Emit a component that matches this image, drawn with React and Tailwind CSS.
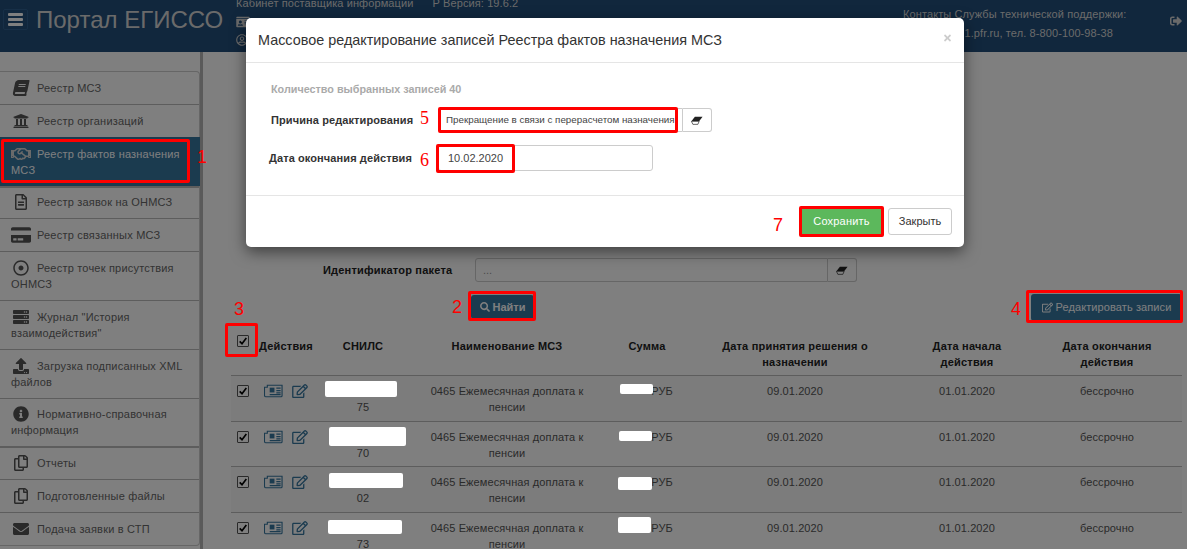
import React from 'react';
import {
  FaBook, FaUniversity, FaRegHandshake, FaRegFileAlt, FaCreditCard, FaRegDotCircle, FaServer,
  FaUpload, FaInfoCircle, FaRegCopy, FaEnvelope, FaSearch, FaRegEdit,
  FaSignOutAlt, FaTimes, FaIdCard, FaRegUserCircle,
} from 'react-icons/fa';

const iconNarrow = 'ml-[2px] h-[16px] w-[16px]';
const iconWide = '-my-[1px] h-[18px] w-[20px]';

const menuItems = [
  { icon: FaBook, label: 'Реестр МСЗ', iconCls: `${iconNarrow} -skew-x-12` },
  { icon: FaUniversity, label: 'Реестр организаций', iconCls: 'ml-[1px] h-[16px] w-[18px]' },
  { icon: FaRegHandshake, label: 'Реестр фактов назначения МСЗ', active: true, iconCls: iconWide },
  { icon: FaRegFileAlt, label: 'Реестр заявок на ОНМСЗ', iconCls: iconNarrow },
  { icon: FaCreditCard, label: 'Реестр связанных МСЗ', iconCls: iconWide },
  { icon: FaRegDotCircle, label: 'Реестр точек присутствия ОНМСЗ', iconCls: iconNarrow },
  { icon: FaServer, label: 'Журнал "История взаимодействия"', iconCls: iconNarrow },
  { icon: FaUpload, label: 'Загрузка подписанных XML файлов', iconCls: iconNarrow },
  { icon: FaInfoCircle, label: 'Нормативно-справочная информация', iconCls: iconNarrow },
  { icon: FaRegCopy, label: 'Отчеты', iconCls: iconNarrow },
  { icon: FaRegCopy, label: 'Подготовленные файлы', iconCls: iconNarrow },
  { icon: FaEnvelope, label: 'Подача заявки в СТП', iconCls: iconNarrow },
];

const rows = ['75', '70', '02', '73'];

const columns = 'grid grid-cols-[23px_64px_90px_198px_82px_214px_130px_150px]';

// подписи и рамки, нанесённые поверх снимка
const redBoxes = [
  'left-[1px] top-[139px] w-[189px] h-[44px]',
  'left-[225px] top-[323px] w-[33px] h-[34px]',
  'left-[468px] top-[291px] w-[68px] h-[30px]',
  'left-[1026px] top-[290px] w-[157px] h-[33px]',
  'left-[438px] top-[107px] w-[240px] h-[26px]',
  'left-[436px] top-[144px] w-[79px] h-[29px]',
  'left-[799px] top-[206px] w-[85px] h-[31px]',
];

const redLabels = [
  { text: '1', cls: 'left-[197px] top-[148px]' },
  { text: '2', cls: 'left-[452px] top-[298px]' },
  { text: '3', cls: 'left-[234px] top-[300px]' },
  { text: '4', cls: 'left-[1011px] top-[300px]' },
  { text: '5', cls: 'left-[420px] top-[109px] font-["Liberation_Serif",serif]' },
  { text: '6', cls: 'left-[420px] top-[151px] font-["Liberation_Serif",serif]' },
  { text: '7', cls: 'left-[773px] top-[216px]' },
];

const whiteBlobs = [
  'left-[325px] top-[381px] w-[72px] h-[16px]',
  'left-[620px] top-[384px] w-[33px] h-[10px]',
  'left-[329px] top-[427px] w-[77px] h-[19px]',
  'left-[619px] top-[431px] w-[33px] h-[10px]',
  'left-[329px] top-[473px] w-[74px] h-[15px]',
  'left-[618px] top-[477px] w-[34px] h-[13px]',
  'left-[328px] top-[520px] w-[74px] h-[14px]',
  'left-[618px] top-[517px] w-[33px] h-[16px]',
];

const Checkbox = () => (
  <span className="flex h-[12px] w-[12px] items-center justify-center rounded-[1px] border border-[#555] bg-white">
    <svg viewBox="0 0 12 12" className="h-[10px] w-[10px]" fill="none" stroke="#000" strokeWidth="2">
      <path d="M2 6.5 L4.8 9.2 L10 2.5" />
    </svg>
  </span>
);

// ластик лежит плашмя: косой параллелограмм с тёмным верхом
const Eraser = () => (
  <svg viewBox="0 0 14 10" className="h-[9px] w-[12px]">
    <path d="M4.5 0.5 H13.5 L9.5 6 H0.5 Z" fill="#222" />
    <path d="M0.5 6 H9.5 L8 9.5 H2.2 Z" fill="#fff" stroke="#222" strokeWidth="0.8" />
  </svg>
);

const Newspaper = () => (
  <svg viewBox="0 0 20 14" className="h-[14px] w-[19px]" fill="none" stroke="currentColor">
    <path d="M3.5 1 H19 V12 a1 1 0 0 1 -1 1 H2 a1.5 1.5 0 0 1 -1.5 -1.5 V3 H3.5 Z" strokeWidth="1.2" />
    <rect x="6" y="3.5" width="5" height="5" fill="currentColor" stroke="none" />
    <path d="M13 4 H17.5 M13 6.5 H17.5 M13 9 H17.5 M6 10.8 H17.5" strokeWidth="1.3" />
  </svg>
);

const Sidebar = () => (
  <aside className="w-[203px] shrink-0 border-r-[3px] border-[#b5b5b5] pt-[19px]">
    <div className="w-[200px] rounded-r-[4px] border-y border-r border-[#ccc]">
      {menuItems.map((item, i) => {
        const Icon = item.icon;
        let rowCls = 'border-t border-[#bbb] pt-[8px] text-[#666]';
        if (i === 0) rowCls = 'pt-[8px] text-[#666]';
        if (item.active) rowCls = '-mr-px bg-[#36769f] pt-[9px] text-white';
        if (i === 3) rowCls = 'border-t-2 border-[#bbb] pt-[6px] text-[#666]';
        if (i === 8) rowCls = 'border-t border-[#bbb] pt-[7px] text-[#666]';
        if (i === 9) rowCls = 'border-t-2 border-[#bbb] pt-[7px] text-[#666]';
        return (
          <div key={i} className={`px-[11px] pb-[8px] text-[11px] leading-[16px] tracking-[0.2px] ${rowCls}`}>
            <span className="inline-block h-[16px] w-[26px] align-top">
              <Icon className={`block ${item.iconCls} ${item.active ? 'text-[#d5d5d5]' : 'text-[#555]'}`} />
            </span>
            {item.label}
          </div>
        );
      })}
    </div>
  </aside>
);

const Records = () => (
  <main className="flex-1 pl-[28px] pr-[5px] pt-[206px] text-[11px] text-[#555]">
    <div className="flex h-[24px] items-center">
      <span className="ml-[92px] w-[152px] font-bold text-[#222] tracking-[0.2px]">Идентификатор пакета</span>
      <div className="flex h-[24px] w-[382px]">
        <div className="flex-1 rounded-l-[3px] border border-[#ccc] px-[7px] leading-[22px] text-[#999]">...</div>
        <div className="flex w-[29px] items-center justify-center rounded-r-[3px] border border-l-0 border-[#ccc]">
          <Eraser />
        </div>
      </div>
    </div>

    <div className="mt-[12px] flex h-[26px] items-center justify-between">
      <button className="ml-[240px] flex h-[24px] w-[63px] items-center justify-center gap-[3px] rounded-[3px] bg-[#36769f] font-bold text-white">
        <FaSearch className="h-[10px] w-[10px]" />
        Найти
      </button>
      <button className="flex h-[27px] w-[151px] items-center justify-center gap-[3px] rounded-[3px] bg-[#36769f] tracking-[0.1px] text-white">
        <FaRegEdit className="h-[11px] w-[11px]" />
        Редактировать записи
      </button>
    </div>

    <div className={`${columns} mt-[17px] h-[39px] border-b border-[#bbb] text-center font-bold leading-[16px] text-[#222] tracking-[0.2px]`}>
      <div className="-mt-[2px] flex justify-center">
        <Checkbox />
      </div>
      <div className="pt-[1px]">Действия</div>
      <div className="pt-[1px]">СНИЛС</div>
      <div className="pt-[1px]">Наименование МСЗ</div>
      <div className="pt-[1px]">Сумма</div>
      <div className="px-[14px] pt-[1px]">Дата принятия решения о назначении</div>
      <div className="px-[20px] pt-[1px]">Дата начала действия</div>
      <div className="px-[20px] pt-[1px]">Дата окончания действия</div>
    </div>

    {rows.map((tail, i) => (
      <div
        key={i}
        className={`${columns} h-[45.5px] border-b border-[#bbb] pt-[7px] text-center leading-[16px] tracking-[0.1px] ${i % 2 === 0 ? 'bg-[#f8f8f8]' : ''}`}
      >
        <div className="flex justify-center pt-[2px]">
          <Checkbox />
        </div>
        <div className="flex items-start justify-center gap-[9px] pt-[1px] text-[#36769f]">
          <Newspaper />
          <FaRegEdit className="h-[14px] w-[16px]" />
        </div>
        <div className="pt-[16px]">{tail}</div>
        <div className="px-[17px]">0465 Ежемесячная доплата к пенсии</div>
        <div className="pl-[30px]">РУБ</div>
        <div>09.01.2020</div>
        <div>01.01.2020</div>
        <div>бессрочно</div>
      </div>
    ))}
  </main>
);

const Modal = () => (
  <div className="absolute left-[246px] top-[18px] flex h-[229px] w-[718px] flex-col rounded-[5px] bg-white shadow-[0_5px_15px_rgba(0,0,0,0.5)]">
    <div className="flex h-[45px] items-center justify-between border-b border-[#e5e5e5] px-[12px] pt-[1px]">
      <h4 className="text-[14.4px] text-[#333]">Массовое редактирование записей Реестра фактов назначения МСЗ</h4>
      <FaTimes className="-mt-[5px] h-[10px] w-[9px] text-[#ccc]" />
    </div>
    <div className="flex-1 pt-[18px] text-[11px] text-[#333]">
      <div className="pl-[25px] text-[10.8px] font-bold leading-[16px] text-[#aaa]">Количество выбранных записей 40</div>
      <div className="mt-[11px] flex h-[24px] items-center">
        <span className="w-[167px] pl-[25px] font-bold tracking-[0.1px] whitespace-nowrap text-[#333]">Причина редактирования</span>
        <div className="ml-[25px] flex h-[24px]">
          <div className="w-[245px] rounded-l-[3px] border border-[#ccc] pl-[7px] text-[9.8px] leading-[22px] text-[#444] whitespace-nowrap">
            Прекращение в связи с перерасчетом назначения
          </div>
          <div className="flex w-[29px] items-center justify-center rounded-r-[3px] border border-l-0 border-[#ccc]">
            <Eraser />
          </div>
        </div>
      </div>
      <div className="mt-[13px] flex h-[26px] items-center">
        <span className="w-[167px] pl-[23px] font-bold tracking-[0.1px] whitespace-nowrap text-[#333]">Дата окончания действия</span>
        <div className="ml-[25px] h-[26px] w-[215px] rounded-[3px] border border-[#ccc] pl-[9px] leading-[24px] text-[#444]">10.02.2020</div>
      </div>
    </div>
    <div className="flex h-[52px] items-start justify-end gap-[6px] border-t border-[#e5e5e5] pr-[12px] pt-[12px] text-[11px]">
      <button className="h-[27px] w-[81px] rounded-[3px] bg-[#5cb85c] tracking-[0.2px] text-white">Сохранить</button>
      <button className="h-[27px] w-[64px] rounded-[3px] border border-[#ccc] bg-white text-[#333]">Закрыть</button>
    </div>
  </div>
);

const App = () => (
  <div className='relative h-[549px] w-[1187px] overflow-hidden bg-white font-["Liberation_Sans",Arial,sans-serif]'>
    <header className="relative flex h-[52px] bg-[#224e7a] text-[11px] text-[#d5d5d5]">
      <div className="ml-[3px] mt-[9px] flex h-[21px] w-[25px] flex-col items-center justify-center gap-[2px] rounded-[2px] border border-[#2f5f8f]">
        <span className="h-[3px] w-[15px] rounded-[1px] bg-white" />
        <span className="h-[3px] w-[15px] rounded-[1px] bg-white" />
        <span className="h-[3px] w-[15px] rounded-[1px] bg-white" />
      </div>
      <div className="ml-[8px] mt-[5px] h-[30px] w-[200px] text-[24px] leading-[30px] whitespace-nowrap">Портал ЕГИССО</div>
      <div className="flex w-[270px] flex-col gap-[6px] leading-[13px]">
        <div className="-mt-[3px] flex whitespace-nowrap tracking-[0.1px]">
          <span>Кабинет поставщика информации</span>
          <span className="ml-[19px]">Р Версия: 19.6.2</span>
        </div>
        <FaIdCard className="h-[12px] w-[14px]" />
        <FaRegUserCircle className="h-[12px] w-[12px]" />
      </div>
      <div className="ml-[397px] mt-[5px] w-[230px] leading-[19px] tracking-[0.1px] whitespace-nowrap">
        <div>Контакты Службы технической поддержки:</div>
        <div className="pr-[20px] text-right">1.pfr.ru, тел. 8-800-100-98-38</div>
      </div>
      <FaSignOutAlt className="ml-[37px] mt-[15px] h-[12px] w-[12px]" />
    </header>

    <div className="flex h-[497px]">
      <Sidebar />
      <Records />
    </div>

    {/* затемнение под модальным окном */}
    <div className="absolute inset-0 bg-black/50" />
    <Modal />

    {whiteBlobs.map((cls, i) => (
      <div key={i} className={`absolute rounded-[2px] bg-white ${cls}`} />
    ))}
    {redBoxes.map((cls, i) => (
      <div key={i} className={`absolute rounded-[2px] border-[3px] border-[#ff0000] ${cls}`} />
    ))}
    {redLabels.map((label) => (
      <span key={label.text} className={`absolute text-[18px] leading-[18px] text-[#ff0000] ${label.cls}`}>
        {label.text}
      </span>
    ))}
  </div>
);

export default App;
